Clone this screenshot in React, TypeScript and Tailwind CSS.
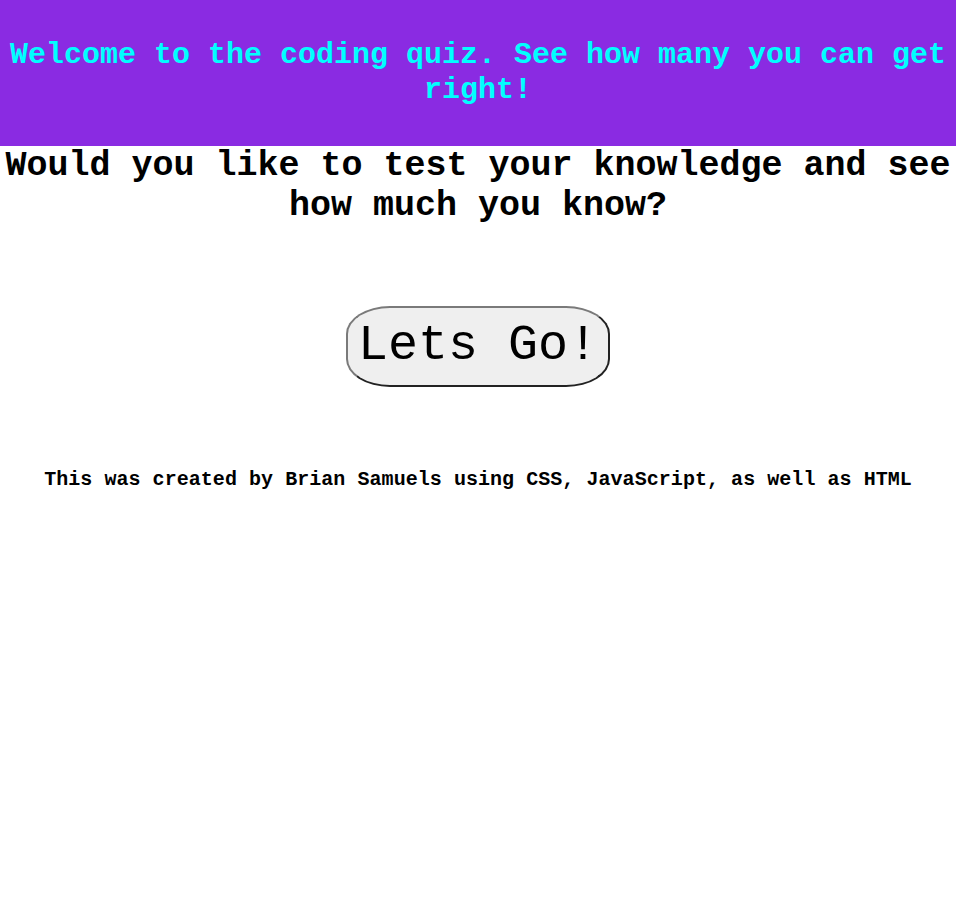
import React from "react";

export default function App() {
  const mono = { fontFamily: '"Courier New", "Nimbus Mono PS", "Liberation Mono", monospace' };
  return (
    <div className="min-h-[924px] w-full bg-white" style={mono}>
      <header className="flex h-[146px] items-center justify-center bg-[#8a2be2]">
        <h1 className="text-center text-[30px] font-bold leading-[34.7px] text-[#00ffff]">
          Welcome to the coding quiz. See how many you can get right!
        </h1>
      </header>
      <h2 className="pt-[1px] text-center text-[35px] font-bold leading-[1.133] text-black">
        Would you like to test your knowledge and see how much you know?
      </h2>
      <div className="mt-[80px] flex justify-center">
        <button className="rounded-[44px/28px] border-2 border-[#767676] border-t-[#7a7a7a] border-l-[#7a7a7a] border-r-[#222] border-b-[#222] bg-[#efefef] px-[10px] py-[10px] text-[50px] font-normal leading-[1.133] text-black">
          Lets Go!
        </button>
      </div>
      <p className="mt-[82px] text-center text-[20px] font-bold leading-[1.133] tracking-[0.05px] text-black">
        This was created by Brian Samuels using CSS, JavaScript, as well as HTML
      </p>
    </div>
  );
}
